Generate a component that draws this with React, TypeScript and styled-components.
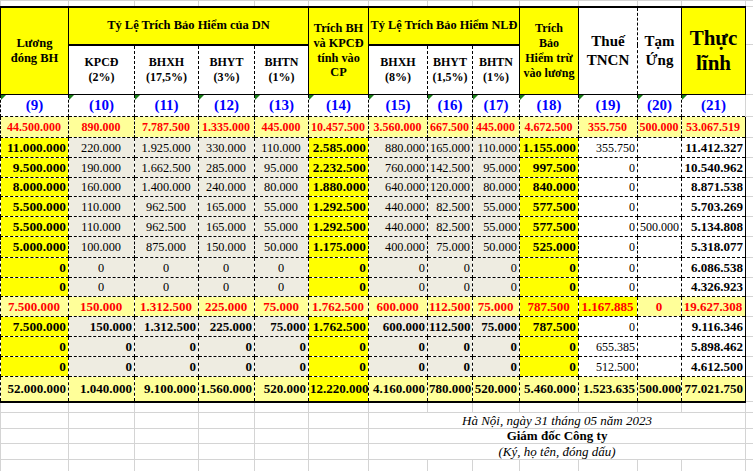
import React from "react";
import styled, { createGlobalStyle, css } from "styled-components";

const GlobalStyle = createGlobalStyle`
  html, body { margin: 0; padding: 0; background: #fff; overflow: hidden; }
  body { font-family: "Liberation Serif", "Times New Roman", serif; }
`;

const YELLOW = "#ffff00";
const LIGHT = "#ffff99";
const GRAY = "#eeece1";
const WHITE = "#ffffff";
const GRID = "#d4d4d4";

const COLS = [68, 66, 64, 56, 54, 60, 59, 45, 47, 59, 59, 44, 64, 30];

const Sheet = styled.table`
  border-collapse: collapse;
  table-layout: fixed;
  width: ${COLS.reduce((a, b) => a + b, 0)}px;
  font-family: "Liberation Serif", "Times New Roman", serif;
  color: #000;
`;

const Col = styled.col<{ $w: number }>`
  width: ${(p) => p.$w}px;
`;

const Row = styled.tr<{ $h: number }>`
  height: ${(p) => p.$h}px;
`;

const GridCell = styled.td`
  border: 1px solid ${GRID};
  padding: 0;
`;

const HeadCell = styled.th<{ $bg: string; $size: number; $lh: number; $dashedSides?: boolean }>`
  border: 1px solid #000;
  border-top: 2px solid #000;
  ${(p) =>
    p.$dashedSides &&
    css`
      border-left: 1px dashed #000;
      border-right: 1px dashed #000;
    `}
  background: ${(p) => p.$bg};
  font-weight: bold;
  font-size: ${(p) => p.$size}px;
  line-height: ${(p) => p.$lh}px;
  text-align: center;
  vertical-align: middle;
  padding: 0 1px;
  white-space: nowrap;
`;

const IndexCell = styled.td`
  position: relative;
  border: 1px dashed #000;
  background: ${WHITE};
  color: #0000ff;
  font-weight: bold;
  font-size: 15px;
  text-align: center;
  vertical-align: middle;
  padding: 0;
  &::before {
    content: "";
    position: absolute;
    top: 0;
    left: 0;
    border-top: 5px solid #1a7f1a;
    border-right: 5px solid transparent;
  }
`;

const NumCell = styled.td<{
  $bg: string;
  $align: "left" | "center" | "right";
  $bold: boolean;
  $size: number;
  $color: string;
  $solidRight?: boolean;
  $thickBottom?: boolean;
}>`
  border: 1px dashed #000;
  ${(p) => p.$solidRight && css`border-right: 1px solid #000;`}
  ${(p) => p.$thickBottom && css`border-bottom: 2px solid #000;`}
  background: ${(p) => p.$bg};
  color: ${(p) => p.$color};
  font-weight: ${(p) => (p.$bold ? "bold" : "normal")};
  font-size: ${(p) => p.$size}px;
  text-align: ${(p) => p.$align};
  vertical-align: middle;
  padding: 0 2px 0 1px;
  white-space: nowrap;
  overflow: hidden;
  line-height: 14px;
`;

const FooterText = styled.td<{ $italic?: boolean; $bold?: boolean }>`
  border: 1px solid ${GRID};
  border-left: none;
  border-right: 1px solid ${GRID};
  text-align: center;
  vertical-align: middle;
  font-size: 13px;
  line-height: 14px;
  padding: 0;
  font-style: ${(p) => (p.$italic ? "italic" : "normal")};
  font-weight: ${(p) => (p.$bold ? "bold" : "normal")};
  white-space: nowrap;
`;

type Kind = "hl1" | "hl2" | "a" | "b" | "total";

const ROWS: { kind: Kind; h: number; v: string[] }[] = [
  { kind: "hl1", h: 21, v: ["44.500.000", "890.000", "7.787.500", "1.335.000", "445.000", "10.457.500", "3.560.000", "667.500", "445.000", "4.672.500", "355.750", "500.000", "53.067.519"] },
  { kind: "a", h: 20, v: ["11.000.000", "220.000", "1.925.000", "330.000", "110.000", "2.585.000", "880.000", "165.000", "110.000", "1.155.000", "355.750", "", "11.412.327"] },
  { kind: "a", h: 20, v: ["9.500.000", "190.000", "1.662.500", "285.000", "95.000", "2.232.500", "760.000", "142.500", "95.000", "997.500", "0", "", "10.540.962"] },
  { kind: "a", h: 19, v: ["8.000.000", "160.000", "1.400.000", "240.000", "80.000", "1.880.000", "640.000", "120.000", "80.000", "840.000", "0", "", "8.871.538"] },
  { kind: "a", h: 20, v: ["5.500.000", "110.000", "962.500", "165.000", "55.000", "1.292.500", "440.000", "82.500", "55.000", "577.500", "0", "", "5.703.269"] },
  { kind: "a", h: 20, v: ["5.500.000", "110.000", "962.500", "165.000", "55.000", "1.292.500", "440.000", "82.500", "55.000", "577.500", "0", "500.000", "5.134.808"] },
  { kind: "a", h: 21, v: ["5.000.000", "100.000", "875.000", "150.000", "50.000", "1.175.000", "400.000", "75.000", "50.000", "525.000", "0", "", "5.318.077"] },
  { kind: "a", h: 20, v: ["0", "0", "0", "0", "0", "0", "0", "0", "0", "0", "0", "", "6.086.538"] },
  { kind: "a", h: 19, v: ["0", "0", "0", "0", "0", "0", "0", "0", "0", "0", "0", "", "4.326.923"] },
  { kind: "hl2", h: 20, v: ["7.500.000", "150.000", "1.312.500", "225.000", "75.000", "1.762.500", "600.000", "112.500", "75.000", "787.500", "1.167.885", "0", "19.627.308"] },
  { kind: "b", h: 20, v: ["7.500.000", "150.000", "1.312.500", "225.000", "75.000", "1.762.500", "600.000", "112.500", "75.000", "787.500", "0", "", "9.116.346"] },
  { kind: "b", h: 20, v: ["0", "0", "0", "0", "0", "0", "0", "0", "0", "0", "655.385", "", "5.898.462"] },
  { kind: "b", h: 20, v: ["0", "0", "0", "0", "0", "0", "0", "0", "0", "0", "512.500", "", "4.612.500"] },
  { kind: "total", h: 25, v: ["52.000.000", "1.040.000", "9.100.000", "1.560.000", "520.000", "12.220.000", "4.160.000", "780.000", "520.000", "5.460.000", "1.523.635", "500.000", "77.021.750"] },
];

type Style = {
  bg: string;
  align: "left" | "center" | "right";
  bold: boolean;
  size: number;
  color: string;
};

function colBg(i: number): string {
  if (i === 0 || i === 5 || i === 9) return YELLOW;
  if (i >= 10) return WHITE;
  return GRAY;
}

function cellStyle(kind: Kind, i: number): Style {
  if (kind === "hl1") {
    return { bg: LIGHT, align: "center", bold: true, size: 12, color: "#ff0000" };
  }
  if (kind === "hl2") {
    const bg = i === 9 || i === 10 ? YELLOW : LIGHT;
    return { bg, align: "center", bold: true, size: 13, color: "#ff0000" };
  }
  if (kind === "total") {
    return { bg: i === 5 ? YELLOW : LIGHT, align: "right", bold: true, size: 13, color: "#000" };
  }
  const bg = colBg(i);
  if (i === 0 || i === 5 || i === 9) return { bg, align: "right", bold: true, size: 13.3, color: "#000" };
  if (i === 12) return { bg, align: "right", bold: true, size: 13, color: "#000" };
  if (i === 10 || i === 11) return { bg, align: "right", bold: false, size: 12, color: "#000" };
  if (kind === "b") return { bg, align: "right", bold: true, size: 13, color: "#000" };
  if (i >= 1 && i <= 4) return { bg, align: "center", bold: false, size: 12.3, color: "#000" };
  return { bg, align: "right", bold: false, size: 12.3, color: "#000" };
}

const INDEX = ["(9)", "(10)", "(11)", "(12)", "(13)", "(14)", "(15)", "(16)", "(17)", "(18)", "(19)", "(20)", "(21)"];

const GridRow: React.FC<{ h: number }> = ({ h }) => (
  <Row $h={h}>
    {COLS.map((_, i) => (
      <GridCell key={i} />
    ))}
  </Row>
);

const FooterRow: React.FC<{ h: number; children: React.ReactNode; italic?: boolean; bold?: boolean }> = ({
  h,
  children,
  italic,
  bold,
}) => (
  <Row $h={h}>
    {COLS.slice(0, 6).map((_, i) => (
      <GridCell key={i} />
    ))}
    <FooterText colSpan={7} $italic={italic} $bold={bold}>
      {children}
    </FooterText>
    <GridCell />
  </Row>
);

export default function App() {
  return (
    <>
      <GlobalStyle />
      <Sheet>
        <colgroup>
          {COLS.map((w, i) => (
            <Col key={i} $w={w} />
          ))}
        </colgroup>
        <tbody>
          <GridRow h={6} />
          <Row $h={38}>
            <HeadCell rowSpan={2} $bg={YELLOW} $size={12.5} $lh={15}>
              Lương
              <br />
              đóng BH
            </HeadCell>
            <HeadCell colSpan={4} $bg={YELLOW} $size={12.5} $lh={15}>
              Tỷ Lệ Trích Bảo Hiểm của DN
            </HeadCell>
            <HeadCell rowSpan={2} $bg={YELLOW} $size={12.3} $lh={14.7}>
              Trích BH
              <br />
              và KPCĐ
              <br />
              tính vào
              <br />
              CP
            </HeadCell>
            <HeadCell colSpan={3} $bg={YELLOW} $size={12.3} $lh={15}>
              Tỷ Lệ Trích Bảo Hiểm NLĐ
            </HeadCell>
            <HeadCell rowSpan={2} $bg={YELLOW} $size={12} $lh={15}>
              Trích
              <br />
              Bảo
              <br />
              Hiểm trừ
              <br />
              vào lương
            </HeadCell>
            <HeadCell rowSpan={2} $bg={WHITE} $size={15} $lh={19} $dashedSides>
              Thuế
              <br />
              TNCN
            </HeadCell>
            <HeadCell rowSpan={2} $bg={WHITE} $size={15} $lh={19} $dashedSides>
              Tạm
              <br />
              Ứng
            </HeadCell>
            <HeadCell rowSpan={2} $bg={YELLOW} $size={21} $lh={25}>
              Thực
              <br />
              lĩnh
            </HeadCell>
            <GridCell />
          </Row>
          <Row $h={50}>
            {[
              ["KPCĐ", "(2%)"],
              ["BHXH", "(17,5%)"],
              ["BHYT", "(3%)"],
              ["BHTN", "(1%)"],
            ].map(([a, b]) => (
              <HeadCell key={a} $bg={WHITE} $size={12} $lh={15} $dashedSides>
                {a}
                <br />
                {b}
              </HeadCell>
            ))}
            {[
              ["BHXH", "(8%)"],
              ["BHYT", "(1,5%)"],
              ["BHTN", "(1%)"],
            ].map(([a, b]) => (
              <HeadCell key={a + "n"} $bg={WHITE} $size={12} $lh={15} $dashedSides>
                {a}
                <br />
                {b}
              </HeadCell>
            ))}
            <GridCell />
          </Row>
          <Row $h={22}>
            {INDEX.map((t) => (
              <IndexCell key={t}>{t}</IndexCell>
            ))}
            <GridCell />
          </Row>
          {ROWS.map((r, ri) => (
            <Row key={ri} $h={r.h}>
              {r.v.map((val, i) => {
                const s = cellStyle(r.kind, i);
                return (
                  <NumCell
                    key={i}
                    $bg={s.bg}
                    $align={s.align}
                    $bold={s.bold}
                    $size={s.size}
                    $color={s.color}
                    $solidRight={i === 12}
                    $thickBottom={r.kind === "total"}
                  >
                    {val}
                  </NumCell>
                );
              })}
              <GridCell />
            </Row>
          ))}
          <GridRow h={11} />
          <FooterRow h={16} italic>
            Hà Nội, ngày 31 tháng 05 năm 2023
          </FooterRow>
          <FooterRow h={15} bold>
            Giám đốc Công ty
          </FooterRow>
          <FooterRow h={16} italic>
            (Ký, họ tên, đóng dấu)
          </FooterRow>
          <GridRow h={20} />
        </tbody>
      </Sheet>
    </>
  );
}
